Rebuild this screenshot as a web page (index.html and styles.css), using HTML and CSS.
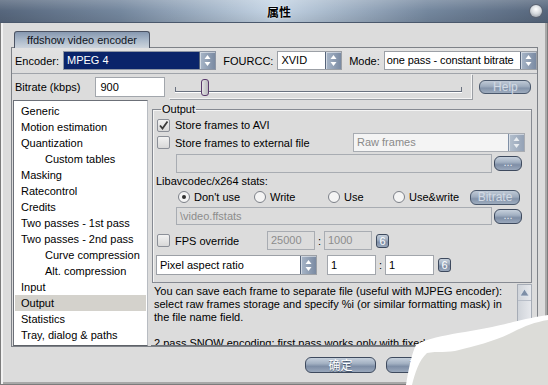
FILE: index.html
```html
<!DOCTYPE html>
<html>
<head>
<meta charset="utf-8">
<link rel="stylesheet" href="styles.css">
</head>
<body>
<div class="window">
  <div class="titlebar">
    <span class="title">属性</span>
    <span class="orb"></span>
  </div>
  <div class="content">
    <div class="tabs"><div class="tab">ffdshow video encoder</div></div>
    <div class="panel">
      <div class="row1">
        <span class="lbl">Encoder:</span>
        <div class="select sel-enc dark"><span class="val">MPEG 4</span><span class="spin"><svg width="7" height="13" viewBox="0 0 7 13"><path d="M3.5 1 L6.5 5 L0.5 5 Z M3.5 12 L6.5 8 L0.5 8 Z" fill="#fff"/></svg></span></div>
        <span class="lbl gap7">FOURCC:</span>
        <div class="select sel-fourcc"><span class="val">XVID</span><span class="spin"><svg width="7" height="13" viewBox="0 0 7 13"><path d="M3.5 1 L6.5 5 L0.5 5 Z M3.5 12 L6.5 8 L0.5 8 Z" fill="#fff"/></svg></span></div>
        <span class="lbl gap7">Mode:</span>
        <div class="select sel-mode"><span class="val">one pass - constant bitrate</span><span class="spin"><svg width="7" height="13" viewBox="0 0 7 13"><path d="M3.5 1 L6.5 5 L0.5 5 Z M3.5 12 L6.5 8 L0.5 8 Z" fill="#fff"/></svg></span></div>
      </div>
      <div class="row2">
        <span class="lbl">Bitrate (kbps)</span>
        <div class="input in-bitrate">900</div>
        <div class="slider">
          <div class="track"></div>
          <div class="thumb"></div>
        </div>
        <div class="pill help">Help</div>
      </div>
      <div class="main">
        <ul class="list">
          <li>Generic</li>
          <li>Motion estimation</li>
          <li>Quantization</li>
          <li class="sub">Custom tables</li>
          <li>Masking</li>
          <li>Ratecontrol</li>
          <li>Credits</li>
          <li>Two passes - 1st pass</li>
          <li>Two passes - 2nd pass</li>
          <li class="sub">Curve compression</li>
          <li class="sub">Alt. compression</li>
          <li>Input</li>
          <li class="selected">Output</li>
          <li>Statistics</li>
          <li>Tray, dialog &amp; paths</li>
        </ul>
        <div class="right">
          <fieldset class="group">
            <legend>Output</legend>
            <div class="frow rowA">
              <span class="check"><svg width="11" height="11" viewBox="0 0 11 11"><path d="M2 5.5 L4.5 8.5 L9.5 1.5" fill="none" stroke="#3a3a3a" stroke-width="1.8"/></svg></span>
              <span>Store frames to AVI</span>
            </div>
            <div class="frow rowB">
              <span class="check"></span>
              <span>Store frames to external file</span>
              <div class="select sel-raw disabled"><span class="val">Raw frames</span><span class="spin"><svg width="7" height="13" viewBox="0 0 7 13"><path d="M3.5 1 L6.5 5 L0.5 5 Z M3.5 12 L6.5 8 L0.5 8 Z" fill="#e8ecf0"/></svg></span></div>
            </div>
            <div class="frow rowC">
              <div class="input disabled wide"></div>
              <div class="pill dots">...</div>
            </div>
            <div class="frow rowD">Libavcodec/x264 stats:</div>
            <div class="frow rowE">
              <span class="radio r1"><span class="circle on"></span>Don't use</span>
              <span class="radio r2"><span class="circle"></span>Write</span>
              <span class="radio r3"><span class="circle"></span>Use</span>
              <span class="radio r4"><span class="circle"></span>Use&amp;write</span>
              <div class="pill bitrate">Bitrate</div>
            </div>
            <div class="frow rowF">
              <div class="input disabled wide">\video.ffstats</div>
              <div class="pill dots">...</div>
            </div>
            <div class="frow rowG">
              <span class="check"></span>
              <span class="fpslbl">FPS override</span>
              <div class="input disabled num">25000</div>
              <span class="colon">:</span>
              <div class="input disabled num">1000</div>
              <div class="pill six">6</div>
            </div>
            <div class="frow rowH">
              <div class="select sel-par"><span class="val">Pixel aspect ratio</span><span class="spin"><svg width="7" height="13" viewBox="0 0 7 13"><path d="M3.5 1 L6.5 5 L0.5 5 Z M3.5 12 L6.5 8 L0.5 8 Z" fill="#fff"/></svg></span></div>
              <div class="input num2 first">1</div>
              <span class="colon">:</span>
              <div class="input num2">1</div>
              <div class="pill six">6</div>
            </div>
          </fieldset>
          <div class="helparea">
            <p class="helptext">You can save each frame to separate file (useful with MJPEG encoder):<br>select raw frames storage and specify %i (or similar formatting mask) in<br>the file name field.<br><br>2 pass SNOW encoding: first pass works only with fixed quantizer.</p>
            <div class="scrollbar"><span class="sbup"><svg width="11" height="9" viewBox="0 0 11 9"><path d="M5.5 1 L10 8 L1 8 Z" fill="#7d8ea6" stroke="#dfe6ee" stroke-width="0.8"/></svg></span></div>
          </div>
        </div>
      </div>
    </div>
    <div class="buttons">
      <div class="pill dlg">确定</div>
      <div class="pill dlg">取消</div>
      <div class="pill dlg">应用</div>
    </div>
  </div>
  <svg class="curl" width="145" height="72" viewBox="0 0 145 72">
    <path d="M3 72 C5 60 8 42 13 32 C25 25 40 23 55 20 C75 17 95 13 110 9 C122 6 132 4 145 2 L145 72 Z" fill="#ffffff"/>
    <path d="M9 72 C12 60 16 47 24 40 C34 38 45 40 56 37 C72 33 92 28 110 19 C122 13 132 9 145 7 L145 72 Z" fill="#dcdcd8"/>
  </svg>
</div>
</body>
</html>
```

FILE: styles.css
```css
html, body {
  margin: 0;
  padding: 0;
  background: #dcdcdc;
}
body {
  font-family: "Liberation Sans", Arial, sans-serif;
  font-size: 11px;
  color: #000;
}
.window {
  position: relative;
  width: 548px;
  height: 385px;
  background: #dcdcdc;
  overflow: hidden;
  display: flex;
  flex-direction: column;
  box-shadow: inset 1px 0 #7c7c7c, inset -1px 0 #7c7c7c, inset 0 -1px #7c7c7c,
              inset 3px 0 #f2f2f2, inset -3px 0 #a8a8a8, inset 0 -3px #a8a8a8;
}
.titlebar {
  height: 23px;
  flex: none;
  display: flex;
  align-items: center;
  justify-content: center;
  position: relative;
  background:
    linear-gradient(rgba(255,255,255,0.18), rgba(255,255,255,0) 50%, rgba(0,0,0,0.08)),
    linear-gradient(90deg, #56667c 0%, #74879e 22%, #c6d6e6 50%, #74879e 78%, #56667c 100%);
  border-bottom: 1px solid #4a586c;
  box-sizing: border-box;
}
.title {
  font-family: "Noto Sans CJK SC", sans-serif;
  font-weight: bold;
  font-size: 12px;
  color: #000;
  text-shadow: 0 0 2px #fff;
  margin-left: 10px;
}
.orb {
  position: absolute;
  right: 6px;
  top: 5px;
  width: 12px;
  height: 12px;
  border-radius: 50%;
  background: radial-gradient(circle at 50% 35%, #ffffff 0%, #d8dce0 45%, #8c939c 100%);
  box-shadow: 0 0 0 1px #5c6472;
}
.content {
  flex: 1;
  padding: 8px 10px 0 11px;
  display: flex;
  flex-direction: column;
}
.tabs {
  display: flex;
  height: 16px;
}
.tab {
  position: relative;
  z-index: 1;
  margin-left: 3px;
  width: 136px;
  height: 17px;
  box-sizing: border-box;
  border: 1px solid #4c5464;
  border-bottom: none;
  border-radius: 3px 3px 0 0;
  background: linear-gradient(#8698b0, #aebccc 55%, #cdd4dc);
  text-align: center;
  line-height: 16px;
  font-size: 11px;
  color: #10141c;
}
.panel {
  width: 527px;
  height: 300px;
  box-sizing: border-box;
  border: 1px solid #7e8288;
  display: flex;
  flex-direction: column;
  background: #dcdcdc;
}
.row1 {
  height: 26px;
  box-sizing: border-box;
  display: flex;
  align-items: center;
  padding-left: 3px;
  border-bottom: 1px solid #a0a4aa;
  background: linear-gradient(#e2e2e2, #dcdcdc);
}
.lbl { margin-right: 4px; white-space: nowrap; }
.gap7 { margin-left: 7px; }
.select {
  height: 19px;
  box-sizing: border-box;
  border: 1px solid #9ca0a6;
  background: #fff;
  display: flex;
  align-items: stretch;
}
.select .val {
  flex: 1;
  padding-left: 3px;
  line-height: 17px;
  white-space: nowrap;
  overflow: hidden;
}
.select .spin {
  width: 15px;
  flex: none;
  display: flex;
  align-items: center;
  justify-content: center;
  background: linear-gradient(90deg, #a8b6c8, #7a8aa2);
  border-left: 1px solid #56647a;
  box-shadow: inset 1px 1px rgba(255,255,255,0.5);
}
.sel-enc { width: 154px; }
.sel-enc.dark { background: #0a246a; color: #fff; border-color: #8e96a4; }
.sel-fourcc { width: 65px; }
.sel-mode { width: 154px; }
.sel-mode .val { padding-left: 2px; letter-spacing: -0.1px; }
.row2 {
  height: 25px;
  display: flex;
  align-items: center;
  padding-left: 3px;
}
.input {
  height: 20px;
  box-sizing: border-box;
  border: 1px solid #a2a6ac;
  background: #fff;
  padding-left: 3px;
  line-height: 18px;
  white-space: nowrap;
}
.in-bitrate { width: 70px; margin-left: 11px; padding-left: 4px; }
.slider {
  position: relative;
  width: 303px;
  height: 25px;
  margin-left: 4px;
  align-self: flex-start;
  box-sizing: border-box;
  border-right: 1px solid #f4f4f4;
  border-bottom: 1px solid #f4f4f4;
  box-shadow: 1px 1px 0 #9a9ea4;
}
.track {
  position: absolute;
  left: 6px;
  right: 9px;
  top: 13px;
  height: 4px;
  border-bottom: 1px solid #6a7280;
  border-left: 1px solid #6a7280;
  border-right: 1px solid #6a7280;
  box-shadow: 0 1px 0 #fff;
}
.thumb {
  position: absolute;
  left: 32px;
  top: 5px;
  width: 8px;
  height: 17px;
  box-sizing: border-box;
  border: 1px solid #5a3a6c;
  border-radius: 3px;
  background: linear-gradient(90deg, #e4e4e4, #b8b8bc);
}
.pill {
  box-sizing: border-box;
  border: 1px solid #3e4a5e;
  border-radius: 6px;
  background: linear-gradient(#c6d0dc 0%, #a2b0c2 40%, #7e8ea6 60%, #9aa8bc 100%);
  color: #fff;
  text-align: center;
  white-space: nowrap;
}
.help {
  width: 52px;
  height: 14px;
  margin-left: 7px;
  line-height: 12px;
  font-size: 12px;
  color: #d2dae4;
  background: linear-gradient(#c0cad6 0%, #9eacbe 45%, #8494aa 60%, #9eacbe 100%);
  border-color: #4a586c;
}
.main {
  flex: 1;
  display: flex;
  min-height: 0;
}
.list {
  list-style: none;
  margin: 1px 0 0 1px;
  padding: 2px 0 0 0;
  width: 135px;
  height: 246px;
  box-sizing: border-box;
  background: #fff;
  border: 1px solid #6c7078;
  border-right-color: #b8bcc2;
  border-bottom-color: #5e6268;
}
.list li {
  height: 16px;
  line-height: 16px;
  padding-left: 6px;
  margin: 0 1px;
  white-space: nowrap;
}
.list li.sub { padding-left: 30px; }
.list li.selected { background: #d4d2cc; }
.right {
  margin-left: 3px;
  width: 381px;
  display: flex;
  flex-direction: column;
}
.group {
  margin: 4px 0 0 1px;
  padding: 0 0 5px 0;
  width: 380px;
  height: 180px;
  box-sizing: border-box;
  border: 1px solid #868a92;
  box-shadow: inset 1px 1px 0 #f4f4f4;
  min-width: 0;
}
.group legend {
  margin-left: 8px;
  padding: 0 1px;
  line-height: 13px;
  font-size: 11px;
}
.frow {
  display: flex;
  align-items: center;
  white-space: nowrap;
}
.check {
  width: 13px;
  height: 13px;
  box-sizing: border-box;
  border: 1px solid #8c9098;
  border-radius: 2px;
  background: linear-gradient(#f2f2f2, #d8d8d8);
  margin-left: 4px;
  margin-right: 5px;
  display: flex;
  align-items: center;
  justify-content: center;
  flex: none;
}
.rowA { height: 16px; margin-top: 1px; }
.rowB { height: 19px; }
.sel-raw { width: 172px; margin-left: auto; margin-right: 6px; }
.select.disabled { background: #f4f4f4; color: #8a8a8a; border-color: #a8acb2; }
.select.disabled .spin { background: linear-gradient(90deg, #b4c0ce, #94a2b6); border-left-color: #8090a6; }
.rowC { height: 19px; margin-top: 2px; padding-left: 23px; }
.input.disabled { background: #dcdcdc; color: #8c8c8c; border-color: #a8acb2; }
.wide { width: 316px; }
.rowC .wide { height: 19px; }
.dots {
  width: 28px;
  height: 15px;
  margin-left: 2px;
  line-height: 11px;
  color: #e8eef4;
}
.rowD { height: 16px; padding-left: 3px; }
.rowE { height: 16px; padding-left: 25px; }
.radio { display: flex; align-items: center; }
.r1 { width: 76px; }
.r2 { width: 74px; }
.r3 { width: 65px; }
.r4 { width: 77px; }
.circle {
  width: 12px;
  height: 12px;
  box-sizing: border-box;
  border-radius: 50%;
  border: 1px solid #7c8088;
  background: #f4f4f4;
  margin-right: 4px;
  position: relative;
}
.circle.on::after {
  content: "";
  position: absolute;
  left: 3px;
  top: 3px;
  width: 4px;
  height: 4px;
  border-radius: 50%;
  background: #303030;
}
.bitrate {
  width: 50px;
  height: 15px;
  line-height: 13px;
  font-size: 12px;
  color: #d2dae4;
  background: linear-gradient(#c0cad6 0%, #9eacbe 45%, #8494aa 60%, #9eacbe 100%);
  border-color: #4a586c;
}
.rowF { height: 18px; margin-top: 2px; padding-left: 23px; }
.rowF .wide { height: 18px; line-height: 16px; }
.rowG { height: 19px; margin-top: 6px; }
.fpslbl { width: 92px; }
.num { width: 48px; height: 19px; line-height: 17px; }
.colon { width: 9px; text-align: center; }
.six {
  width: 13px;
  height: 14px;
  margin-left: 4px;
  border-radius: 3px;
  line-height: 12px;
  font-size: 11px;
}
.rowH { height: 20px; margin-top: 5px; padding-left: 3px; }
.sel-par { width: 161px; height: 20px; }
.sel-par .val { line-height: 18px; }
.num2 { width: 49px; height: 20px; }
.num2.first { margin-left: 10px; }
.helparea {
  margin-top: 1px;
  flex: 1;
  display: flex;
  overflow: hidden;
  border-bottom: 1px solid #70747a;
}
.helptext {
  margin: 0;
  padding: 1px 0 0 3px;
  flex: 1;
  line-height: 13px;
  font-size: 11px;
  white-space: nowrap;
  overflow: hidden;
}
.scrollbar {
  width: 15px;
  flex: none;
  box-sizing: border-box;
  border: 1px solid #a6acb6;
  background: linear-gradient(90deg, #d0d4da, #e6e8ec);
  display: flex;
  flex-direction: column;
}
.sbup {
  height: 15px;
  display: flex;
  align-items: center;
  justify-content: center;
  border-bottom: 1px solid #b8bec8;
}
.buttons {
  display: flex;
  justify-content: flex-end;
  gap: 10px;
  padding-top: 10px;
  margin-right: -10px;
  padding-right: 10px;
}
.dlg {
  width: 71px;
  height: 16px;
  line-height: 14px;
  font-family: "Noto Sans CJK SC", sans-serif;
  font-size: 12px;
  text-shadow: 0 1px 0 #4a5a70;
}
.curl {
  position: absolute;
  right: 0;
  bottom: 0;
}
```
